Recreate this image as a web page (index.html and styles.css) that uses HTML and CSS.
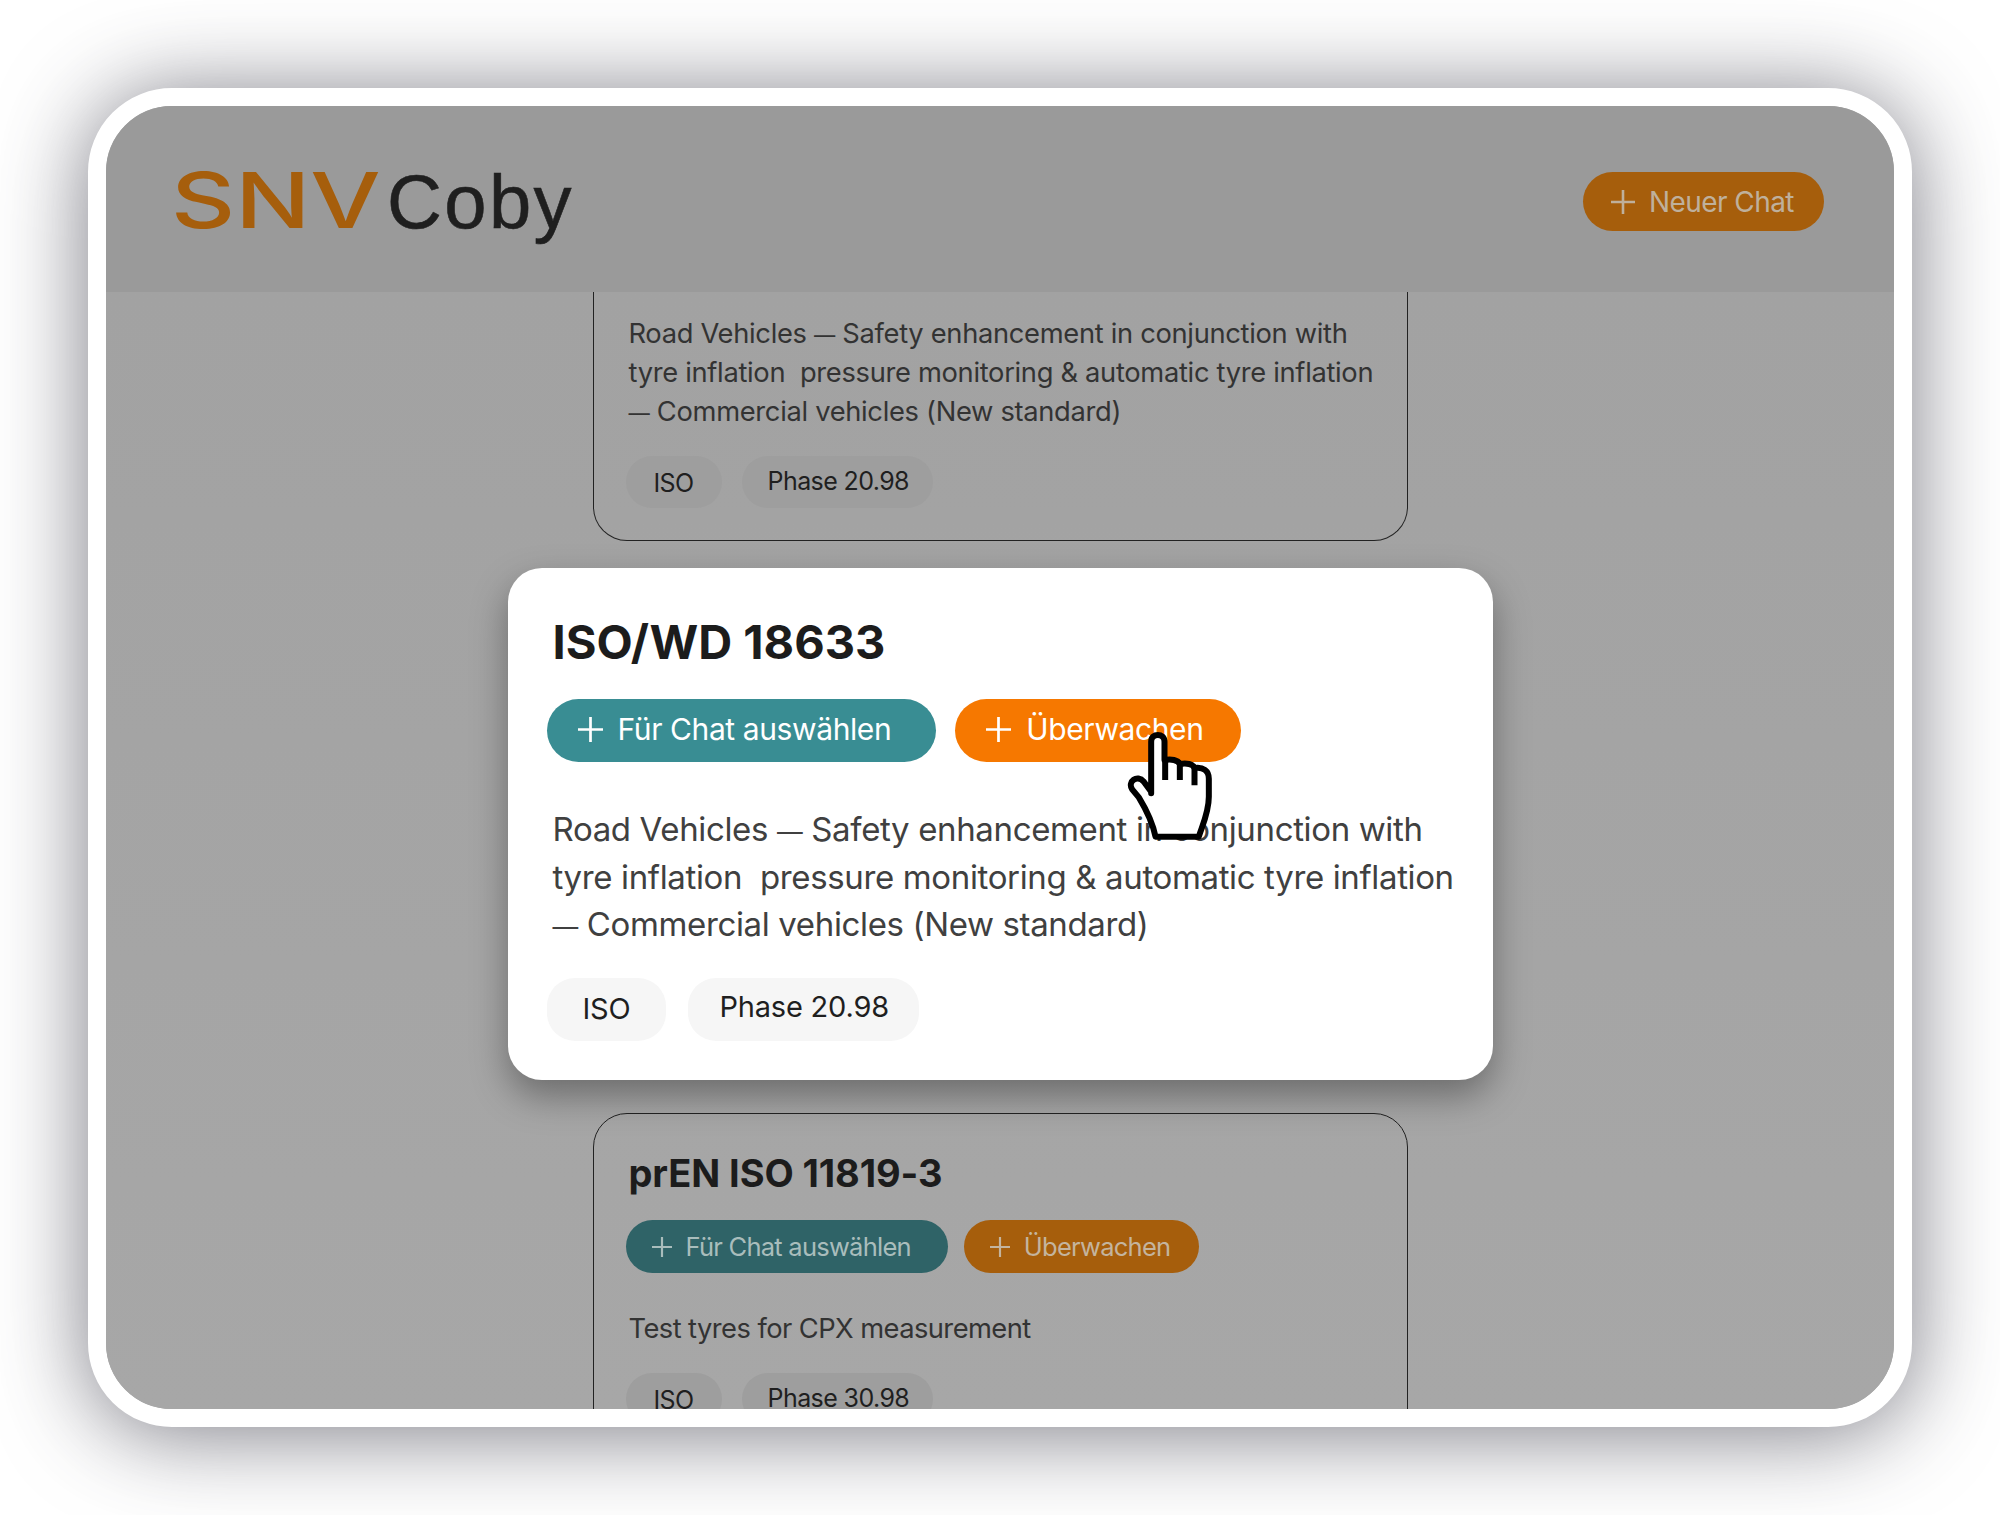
FILE: index.html
```html
<!DOCTYPE html>
<html lang="de">
<head>
<meta charset="utf-8">
<title>SNV Coby</title>
<link rel="stylesheet" href="styles.css">
</head>
<body>
<div class="frame">
  <header class="topbar">
    <div class="logo"><span class="logo-snv"><span class="logo-snv-text">SNV</span></span><span class="logo-coby">Coby</span></div>
    <button class="btn btn-new"><svg class="plus" viewBox="0 0 24 24"><path d="M12 0V24M0 12H24"/></svg>Neuer Chat</button>
  </header>
  <main class="list">
    <article class="card card-clipped">
      <p class="desc">Road Vehicles <span class="dash">—</span> Safety enhancement in conjunction with<br>tyre inflation&nbsp; pressure monitoring &amp; automatic tyre inflation<br><span class="dash">—</span> Commercial vehicles (New standard)</p>
      <div class="tags"><span class="tag tag-iso">ISO</span><span class="tag">Phase 20.98</span></div>
    </article>
    <article class="modal">
      <h2 class="modal-title">ISO/WD 18633</h2>
      <div class="actions">
        <button class="btn btn-teal"><svg class="plus" viewBox="0 0 24 24"><path d="M12 0V24M0 12H24"/></svg>Für Chat auswählen</button>
        <button class="btn btn-orange"><svg class="plus" viewBox="0 0 24 24"><path d="M12 0V24M0 12H24"/></svg>Überwachen</button>
      </div>
      <p class="desc">Road Vehicles <span class="dash">—</span> Safety enhancement in conjunction with<br>tyre inflation&nbsp; pressure monitoring &amp; automatic tyre inflation<br><span class="dash">—</span> Commercial vehicles (New standard)</p>
      <div class="tags"><span class="tag tag-iso">ISO</span><span class="tag">Phase 20.98</span></div>
      <svg class="cursor" viewBox="140 150 260 330">
        <path d="M212 340V185C212 158 252 158 252 185V240C272 236 292 240 298 252C318 248 338 252 342 264C368 260 385 272 385 296V350C385 395 368 430 355 470H225C215 420 195 385 175 352L155 328C140 305 170 282 190 305L212 335Z"/>
        <path d="M254 240V300M298 252V300M342 264V316"/>
      </svg>
    </article>
    <article class="card">
      <h3 class="card-title">prEN ISO 11819-3</h3>
      <div class="actions">
        <button class="btn btn-teal"><svg class="plus" viewBox="0 0 24 24"><path d="M12 0V24M0 12H24"/></svg>Für Chat auswählen</button>
        <button class="btn btn-orange"><svg class="plus" viewBox="0 0 24 24"><path d="M12 0V24M0 12H24"/></svg>Überwachen</button>
      </div>
      <p class="desc">Test tyres for CPX measurement</p>
      <div class="tags"><span class="tag tag-iso">ISO</span><span class="tag">Phase 30.98</span></div>
    </article>
  </main>
</div>
</body>
</html>
```
FILE: styles.css
```css
* { box-sizing: border-box; }
html, body { margin: 0; height: 100%; background: #fff; }
body {
  padding: 88px;
  height: 1515px;
  overflow: hidden;
  font-family: Inter, "Liberation Sans", sans-serif;
}
.frame {
  height: 1339px;
  width: 1824px;
  border: 18px solid #fff;
  border-radius: 84px;
  background: #a4a4a4;
  box-shadow: 0 6px 90px rgba(50, 50, 65, .65);
  display: flex;
  flex-direction: column;
  overflow: hidden;
}
.topbar {
  flex: 0 0 186px;
  background: #9a9a9a;
  display: flex;
  align-items: center;
  justify-content: space-between;
  padding: 0 70px;
  position: relative;
  z-index: 1;
}
.logo { display: flex; align-items: baseline; gap: 8px; margin-top: 3px; }
.logo-snv { width: 203px; }
.logo-snv-text {
  display: inline-block;
  margin-left: -5px;
  font: 500 77px/1 Inter, sans-serif;
  color: #a65e0c;
  transform: scaleX(1.29);
  transform-origin: left center;
}
.logo-coby {
  font: 400 76px/1 "Liberation Sans", sans-serif;
  color: #1f1f1f;
  letter-spacing: 2.4px;
  -webkit-text-stroke: .6px #1f1f1f;
}
.btn {
  display: inline-flex;
  align-items: center;
  border: 0;
  border-radius: 40px;
  font-family: inherit;
  white-space: nowrap;
}
.plus { fill: none; stroke: currentColor; stroke-width: 2.6; flex: none; }
.btn-new {
  height: 59px;
  margin-top: 5px;
  padding: 0 30px 0 28px;
  gap: 14px;
  background: #a65e0c;
  color: #bfb09c;
  font-size: 28px;
  letter-spacing: -.55px;
}
.btn-new .plus { width: 24px; height: 24px; }
.list {
  flex: 1;
  min-height: 0;
  display: flex;
  flex-direction: column;
  align-items: center;
  overflow: hidden;
  background: linear-gradient(#a2a2a2, #a7a7a7);
}
.dash { font-size: .78em; line-height: 0; }
.card {
  flex: none;
  width: 815px;
  padding: 37px 35px 33px;
  border: 1px solid #222;
  border-radius: 34px;
  margin-top: 33px;
}
.card-clipped {
  margin-top: 0;
  height: 249px;
  padding-top: 22px;
  border-top: 0;
  border-radius: 0 0 34px 34px;
}
.card .desc {
  font-size: 27.3px;
  line-height: 39px;
  color: #333;
  margin: 0;
  letter-spacing: -.31px;
  white-space: nowrap;
}
.card .tags { margin: 25px 0 0 -3px; gap: 20px; }
.card .tag { height: 52px; padding: 0 24px 2px 26px; font-size: 25px; letter-spacing: -.6px; background: #9e9e9e; color: #1f1f1f; }
.card .tag-iso { padding: 1px 28px 0; }
.card-title {
  margin: 0;
  font-size: 38px;
  line-height: 44px;
  font-weight: 700;
  color: #1c1c1c;
  letter-spacing: -.1px;
}
.card .actions { margin: 25px 0 0 -3px; gap: 16px; }
.card .btn { height: 53px; gap: 14px; font-size: 25.5px; letter-spacing: -.75px; }
.card .plus { width: 20px; height: 20px; }
.card .btn-teal { padding: 0 37px 0 26px; background: #2f6367; color: #a9bdbc; }
.card .btn-orange { padding: 0 29px 0 26px; background: #a65e0c; color: #c4b49e; }
.card .desc:not(:first-child) { margin-top: 36px; letter-spacing: -.56px; }
.tags, .actions { display: flex; }
.tag {
  display: inline-flex;
  align-items: center;
  border-radius: 28px;
}
.modal {
  flex: none;
  position: relative;
  width: 985px;
  height: 512px;
  margin-top: 27px;
  padding: 44px 45px 0;
  background: #fff;
  border-radius: 34px;
  box-shadow: 0 16px 36px rgba(0, 0, 0, .35);
}
.modal-title {
  margin: 0;
  font-size: 47px;
  line-height: 60px;
  font-weight: 700;
  color: #1c1c1c;
}
.modal .actions { margin: 27px 0 0 -6px; gap: 19px; }
.modal .btn { height: 63px; gap: 15px; font-size: 30px; letter-spacing: -.4px; color: #fff; }
.modal .btn-teal { padding: 0 45px 3px 31px; }
.modal .btn-orange { padding: 0 38px 3px 31px; }
.modal .plus { width: 25px; height: 25px; }
.btn-teal { background: #398d93; }
.btn-orange { background: #f67800; }
.modal .desc {
  margin: 44px 0 0;
  font-size: 33px;
  line-height: 47.5px;
  color: #404040;
  letter-spacing: -.36px;
  white-space: nowrap;
}
.modal .tags { margin: 29px 0 0 -6px; gap: 22px; }
.modal .tag { height: 63px; padding: 0 30px 6px 31px; font-size: 29px; letter-spacing: -.2px; background: #f6f6f6; color: #1f1f1f; }
.modal .tag-iso { padding: 0 36px 1px; }
.cursor {
  position: absolute;
  left: 619px;
  top: 162px;
  width: 87px;
  height: 110px;
  fill: #fff;
  stroke: #000;
  stroke-width: 18;
  stroke-linejoin: round;
}
```
